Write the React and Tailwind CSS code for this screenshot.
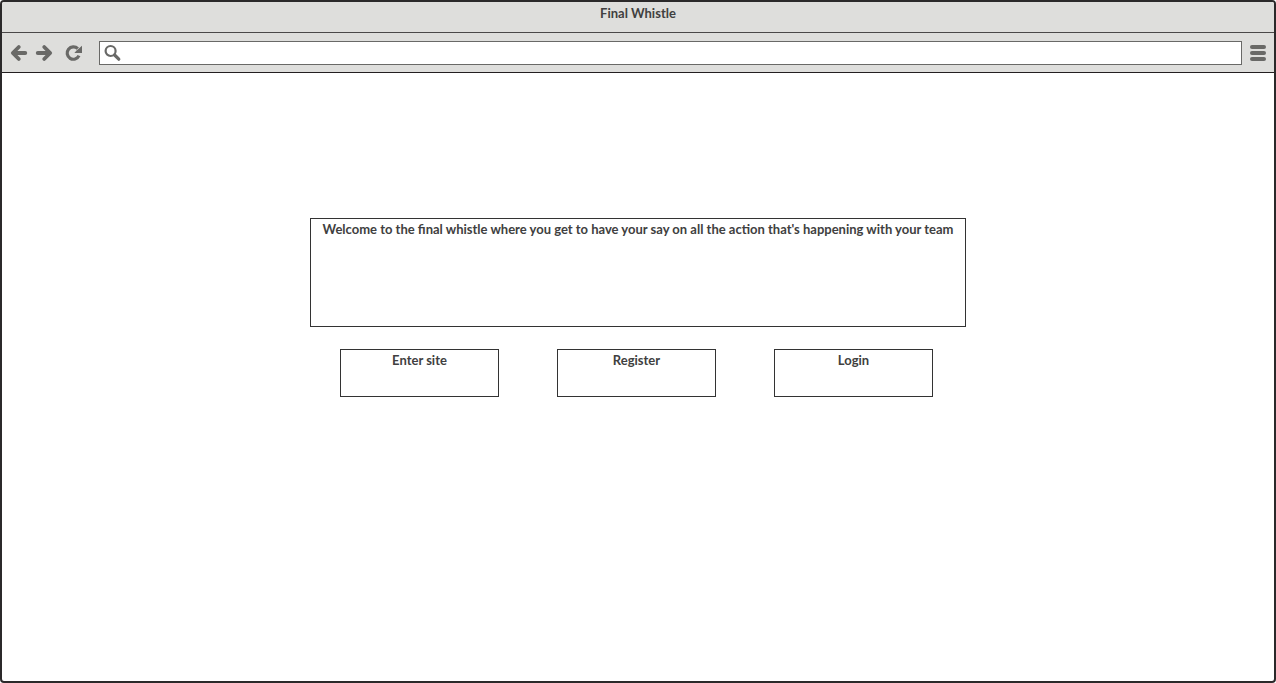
import React from "react";

const toolButton = "flex h-5 w-[18px] items-center justify-center text-[#696967]";

function ArrowIcon({ flipped = false }) {
  return (
    <svg
      viewBox="0 0 18 18"
      className={flipped ? "size-[18px] rotate-180" : "size-[18px]"}
      fill="none"
      stroke="currentColor"
      strokeLinecap="round"
      strokeLinejoin="round"
      aria-hidden="true"
    >
      <path d="M4 9H15.2" strokeWidth="4" />
      <path d="M8.8 3L2.8 9L8.8 15" strokeWidth="3.8" />
    </svg>
  );
}

function ReloadIcon() {
  return (
    <svg viewBox="0 0 18 18" className="size-[18px]" fill="none" aria-hidden="true">
      <path d="M12.8 4.7A6.2 6.2 0 1 0 14 11.6" stroke="currentColor" strokeWidth="3.2" />
      <path d="M17 1.8V9H9.4L11.6 6.6Z" fill="currentColor" />
    </svg>
  );
}

function SearchIcon() {
  return (
    <svg viewBox="0 0 18 18" className="size-[18px] shrink-0 text-[#696967]" fill="none" stroke="currentColor" aria-hidden="true">
      <circle cx="6.6" cy="7" r="5" strokeWidth="2.2" />
      <path d="M10.6 11L14.8 15.2" strokeWidth="3.2" strokeLinecap="round" />
    </svg>
  );
}

function MenuIcon() {
  return (
    <svg viewBox="0 0 16 16" className="size-4" fill="currentColor" aria-hidden="true">
      <rect y="0" width="16" height="4" rx="2" />
      <rect y="6" width="16" height="4" rx="2" />
      <rect y="12" width="16" height="4" rx="2" />
    </svg>
  );
}

function ActionButton({ children }) {
  return (
    <button
      type="button"
      className="flex h-12 w-[159px] items-start justify-center border border-[#333333] bg-white leading-5"
    >
      {children}
    </button>
  );
}

export default function App() {
  return (
    <div className="flex min-h-screen flex-col overflow-hidden rounded-[4px] border-2 border-[#2b292a] bg-white font-['Lato','Liberation_Sans',sans-serif] text-[13px] font-bold text-[#404040]">
      <header className="bg-[#dededc]">
        <h1 className="h-[31px] border-b border-[#4a4848] text-center leading-[22px]">Final Whistle</h1>
        <div className="flex h-10 items-center border-b border-[#231f20] px-2">
          <nav aria-label="History" className="flex items-center">
            <button type="button" aria-label="Back" className={toolButton}>
              <ArrowIcon />
            </button>
            <button type="button" aria-label="Forward" className={`${toolButton} ml-[7px]`}>
              <ArrowIcon flipped />
            </button>
            <button type="button" aria-label="Reload" className={`${toolButton} ml-3`}>
              <ReloadIcon />
            </button>
          </nav>
          <label className="ml-4 flex h-6 flex-1 items-center border border-[#696967] bg-white pl-1">
            <SearchIcon />
            <input type="text" aria-label="Address" className="h-full min-w-0 flex-1 px-1 outline-none" />
          </label>
          <button type="button" aria-label="Menu" className="ml-2 text-[#696967]">
            <MenuIcon />
          </button>
        </div>
      </header>
      <main className="mx-auto w-full max-w-[656px] pt-[145px]">
        <p className="h-[109px] border border-[#333333] text-center leading-5">
          Welcome to the final whistle where you get to have your say on all the action that's happening with your team
        </p>
        <div className="mt-[22px] flex gap-[58px] px-[30px]">
          <ActionButton>Enter site</ActionButton>
          <ActionButton>Register</ActionButton>
          <ActionButton>Login</ActionButton>
        </div>
      </main>
    </div>
  );
}
